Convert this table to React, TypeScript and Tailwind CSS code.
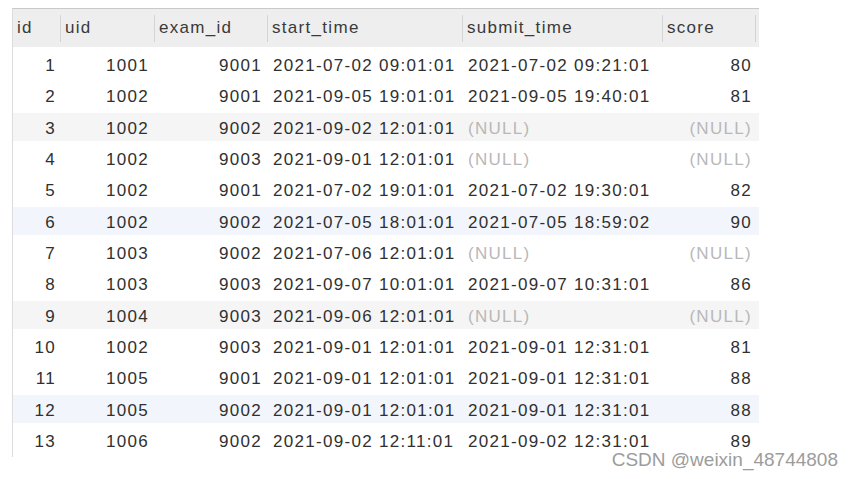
import React from "react";

type Row = {
  id: number;
  uid: number;
  exam: number;
  start: string;
  submit: string | null;
  score: number | null;
  band?: "gray" | "blue";
};

const rows: Row[] = [
  { id: 1, uid: 1001, exam: 9001, start: "2021-07-02 09:01:01", submit: "2021-07-02 09:21:01", score: 80 },
  { id: 2, uid: 1002, exam: 9001, start: "2021-09-05 19:01:01", submit: "2021-09-05 19:40:01", score: 81 },
  { id: 3, uid: 1002, exam: 9002, start: "2021-09-02 12:01:01", submit: null, score: null, band: "gray" },
  { id: 4, uid: 1002, exam: 9003, start: "2021-09-01 12:01:01", submit: null, score: null },
  { id: 5, uid: 1002, exam: 9001, start: "2021-07-02 19:01:01", submit: "2021-07-02 19:30:01", score: 82 },
  { id: 6, uid: 1002, exam: 9002, start: "2021-07-05 18:01:01", submit: "2021-07-05 18:59:02", score: 90, band: "blue" },
  { id: 7, uid: 1003, exam: 9002, start: "2021-07-06 12:01:01", submit: null, score: null },
  { id: 8, uid: 1003, exam: 9003, start: "2021-09-07 10:01:01", submit: "2021-09-07 10:31:01", score: 86 },
  { id: 9, uid: 1004, exam: 9003, start: "2021-09-06 12:01:01", submit: null, score: null, band: "gray" },
  { id: 10, uid: 1002, exam: 9003, start: "2021-09-01 12:01:01", submit: "2021-09-01 12:31:01", score: 81 },
  { id: 11, uid: 1005, exam: 9001, start: "2021-09-01 12:01:01", submit: "2021-09-01 12:31:01", score: 88 },
  { id: 12, uid: 1005, exam: 9002, start: "2021-09-01 12:01:01", submit: "2021-09-01 12:31:01", score: 88, band: "blue" },
  { id: 13, uid: 1006, exam: 9002, start: "2021-09-02 12:11:01", submit: "2021-09-02 12:31:01", score: 89 },
];

const Null = () => <span className="text-[#b8b8b8]">(NULL)</span>;

function Head({ w, label }: { w: string; label: string }) {
  return (
    <div className={w + " h-full flex items-center pl-[4px]"}>
      <span>{label}</span>
      <div className="ml-auto w-px h-[27px] bg-[#d4d4d4]" />
    </div>
  );
}

export default function App() {
  return (
    <div
      className="w-[855px] h-[479px] bg-white overflow-hidden text-[#303030] text-[17px] tracking-[1.3px]"
      style={{ fontFamily: '"Liberation Sans", Arial, sans-serif' }}
    >
      <div className="pt-[8px] pl-[12px] flex flex-col">
        <div className="w-[747px] border-l border-[#dcdcdc] border-t border-t-[#c8c8c8]">
          <div className="flex h-[38px] bg-[#eeeeee] items-center text-[#3a3a3a]">
            <Head w="w-[48px]" label="id" />
            <Head w="w-[94px]" label="uid" />
            <Head w="w-[113px]" label="exam_id" />
            <Head w="w-[195px]" label="start_time" />
            <Head w="w-[200px]" label="submit_time" />
            <Head w="w-[93px]" label="score" />
          </div>
          <div className="h-[3px]" />
          {rows.map((r) => (
            <div
              key={r.id}
              className={
                "flex h-[31.33px] items-center " +
                (r.band === "gray"
                  ? "bg-[linear-gradient(to_bottom,#f5f5f5_28px,transparent_28px)]"
                  : r.band === "blue"
                  ? "bg-[linear-gradient(to_bottom,#f2f6fc_28px,transparent_28px)]"
                  : "")
              }
            >
              <div className="w-[48px] text-right pr-[5px]">{r.id}</div>
              <div className="w-[94px] text-right pr-[6px]">{r.uid}</div>
              <div className="w-[113px] text-right pr-[6px]">{r.exam}</div>
              <div className="w-[195px] pl-[5px] whitespace-nowrap">{r.start}</div>
              <div className="w-[200px] pl-[5px] whitespace-nowrap">{r.submit ?? <Null />}</div>
              <div className="w-[93px] text-right pr-[4px]">{r.score ?? <Null />}</div>
            </div>
          ))}
        </div>
      </div>
      <div className="flex justify-end pr-[17px] -mt-[7px]">
        <span className="text-[19px] leading-none tracking-normal text-[#9c9c9c]">CSDN @weixin_48744808</span>
      </div>
    </div>
  );
}
